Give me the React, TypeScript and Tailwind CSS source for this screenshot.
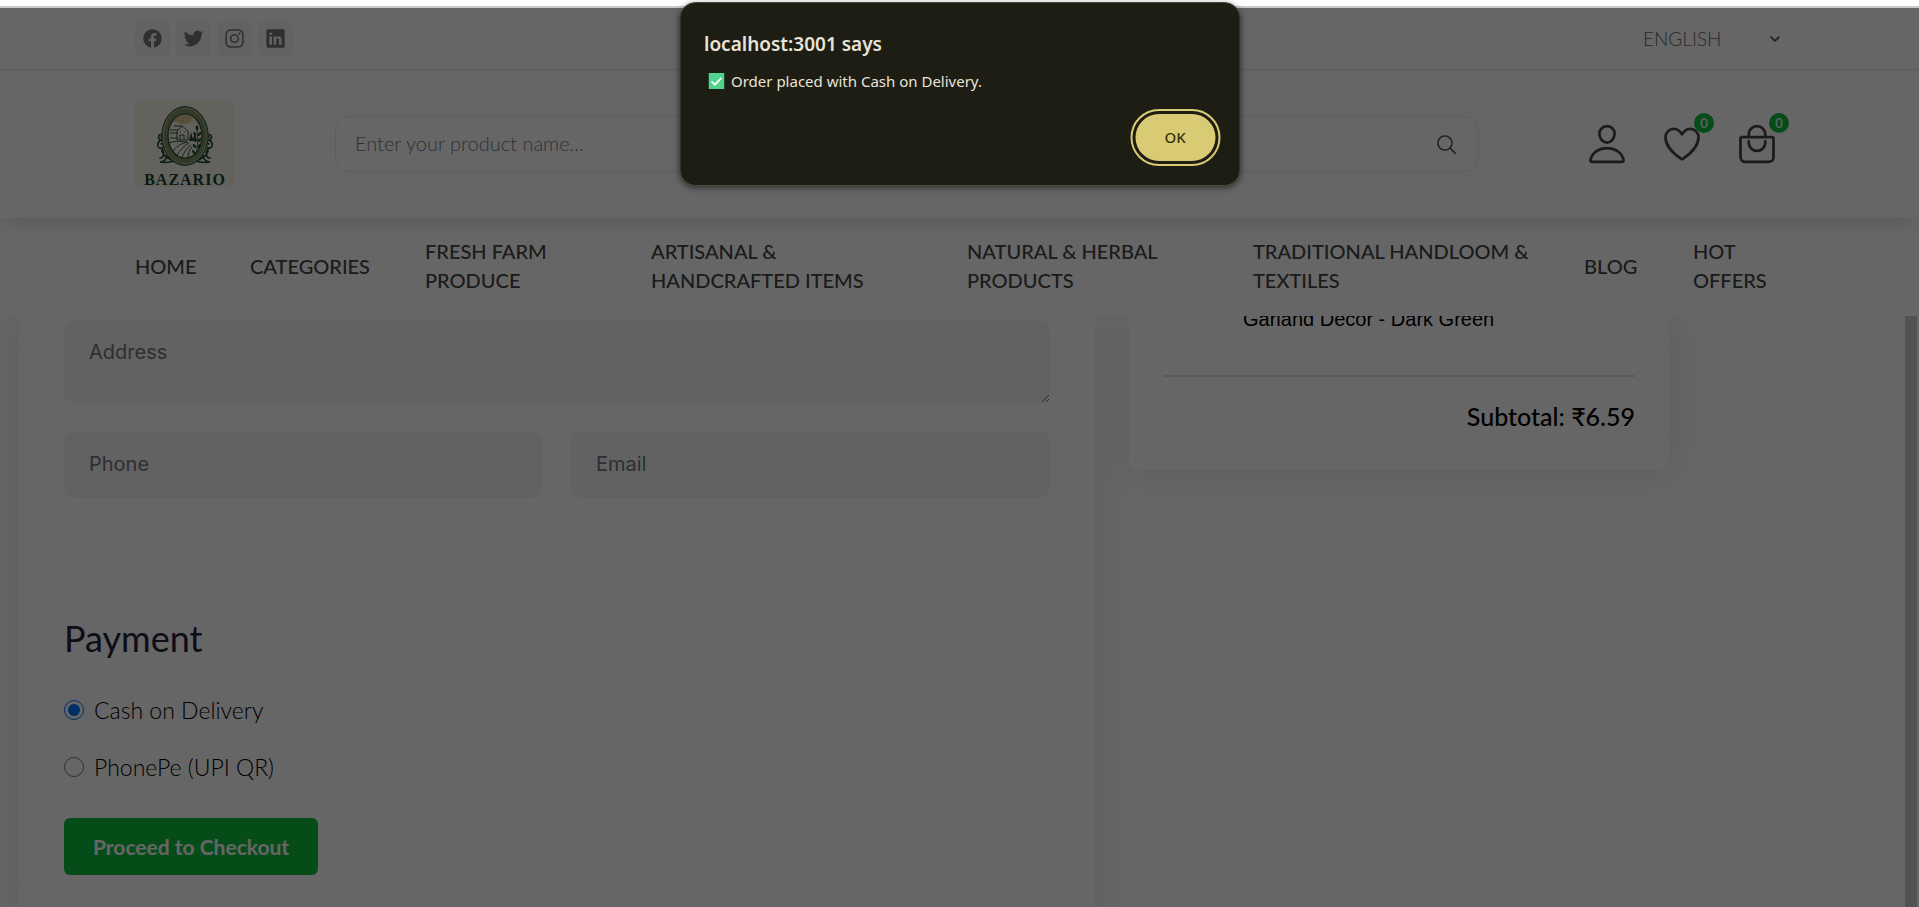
import {
  IoBagHandleOutline,
  IoChevronDown,
  IoHeartOutline,
  IoLogoFacebook,
  IoLogoInstagram,
  IoLogoLinkedin,
  IoLogoTwitter,
  IoPersonOutline,
  IoSearchOutline,
} from "react-icons/io5";

const socials = [
  { name: "Facebook", Icon: IoLogoFacebook },
  { name: "Twitter", Icon: IoLogoTwitter },
  { name: "Instagram", Icon: IoLogoInstagram },
  { name: "LinkedIn", Icon: IoLogoLinkedin },
];

const actions = [
  { name: "Account", Icon: IoPersonOutline, count: null },
  { name: "Wishlist", Icon: IoHeartOutline, count: 0 },
  { name: "Cart", Icon: IoBagHandleOutline, count: 0 },
];

const navItems = [
  ["HOME"],
  ["CATEGORIES"],
  ["FRESH FARM", "PRODUCE"],
  ["ARTISANAL &", "HANDCRAFTED ITEMS"],
  ["NATURAL & HERBAL", "PRODUCTS"],
  ["TRADITIONAL HANDLOOM &", "TEXTILES"],
  ["BLOG"],
  ["HOT", "OFFERS"],
];

const fieldClass =
  "block w-full rounded-[10px] bg-[#f5f5f5] px-[25px] font-['Inter',sans-serif] text-[20px] leading-[30px] placeholder:text-[#74747f] outline-none";

function Logo() {
  return (
    <a href="#" aria-label="Bazario" className="flex h-[86px] w-[100px] flex-col items-center bg-[#f8f4e8] pt-1">
      <svg viewBox="0 0 60 62" className="h-[62px] w-[60px] shrink-0" fill="none">
        <g stroke="#1d4a37" strokeWidth="1.6" strokeLinecap="round">
          <path d="M8 30c-5-2-6 4-2 5c3 0 3-4 0-3M6 35c-5 3-4 9 1 8c4-1 2-6-1-4M7 43c-1 7 7 12 15 13M8 45c2 5 0 8-3 8M12 50c0 4-3 7-7 7c5 1 11 0 15-1M9 32c-1 5 1 10 5 15" />
          <path d="M52 30c5-2 6 4 2 5c-3 0-3-4 0-3M54 35c5 3 4 9-1 8c-4-1-2-6 1-4M53 43c1 7-7 12-15 13M52 45c-2 5 0 8 3 8M48 50c0 4 3 7 7 7c-5 1-11 0-15-1M51 32c1 5-1 10-5 15" />
        </g>
        <ellipse cx="30" cy="31" rx="23.2" ry="29.4" fill="#7f8f60" stroke="#1d4a37" strokeWidth="1" />
        <ellipse cx="30" cy="31" rx="21.8" ry="28" stroke="#cfd0b4" strokeWidth="0.6" />
        <ellipse cx="30" cy="31" rx="17" ry="22" fill="#f6f1e4" stroke="#1d4a37" strokeWidth="1.2" />
        <path d="M20 14c6-5 14-5 19-1l-4 2h4l-5 2h3l-7 2h-7l2-2h-6z" fill="#dcc48c" />
        <g stroke="#1d4a37" strokeWidth="0.9">
          <path d="M15 25h8M15 28h8M15 33h8M22 35v-9l5-5l6 5v9zM19 21h8M25 35v-5h4v5M25 27h1M29 27h1" />
          <path d="M14 38c7-3 13-1 18-1M18 46c4-5 9-8 15-9M22 50c3-5 7-9 12-12M27 52c2-5 5-9 9-12M33 52c0-4 2-8 4-10" />
        </g>
        <path d="M34 36l2-9l2 7l2-6l2 8z" fill="#1d4a37" />
        <path d="M41 50c2-9 2-18 1-26" stroke="#1d4a37" strokeWidth="0.9" />
        <g fill="#1d4a37">
          <ellipse cx="42" cy="23" rx="1.4" ry="2.4" />
          <ellipse cx="39.8" cy="29" rx="1.2" ry="2.3" transform="rotate(-35 39.8 29)" />
          <ellipse cx="44.6" cy="29" rx="1.2" ry="2.3" transform="rotate(35 44.6 29)" />
          <ellipse cx="39.8" cy="35" rx="1.2" ry="2.3" transform="rotate(-35 39.8 35)" />
          <ellipse cx="44.6" cy="35" rx="1.2" ry="2.3" transform="rotate(35 44.6 35)" />
          <ellipse cx="39.4" cy="41" rx="1.2" ry="2.3" transform="rotate(-35 39.4 41)" />
          <ellipse cx="44.2" cy="41" rx="1.2" ry="2.3" transform="rotate(35 44.2 41)" />
          <ellipse cx="38.6" cy="47" rx="1.2" ry="2.3" transform="rotate(-35 38.6 47)" />
        </g>
      </svg>
      <span className="pt-[2px] font-['Liberation_Serif',serif] text-[16px] font-bold leading-[22px] tracking-[1px] text-[#17452f]">
        BAZARIO
      </span>
    </a>
  );
}

function Header() {
  return (
    <header className="relative shrink-0 bg-white">
      <div className="border-b border-[#e9e9e9] px-[135px] py-[13px]">
        <div className="flex items-center justify-between">
          <div className="flex gap-[6px]">
            {socials.map(({ name, Icon }) => (
              <a
                key={name}
                href="#"
                aria-label={name}
                className="flex size-[35px] items-center justify-center rounded-[6px] bg-[#f5f5f5] text-[#757575]"
              >
                <Icon className="size-[21px]" />
              </a>
            ))}
          </div>
          <div className="relative flex items-center">
            <select
              aria-label="Language"
              className="w-[141px] appearance-none bg-transparent text-[19px] font-light leading-[26px] text-[#666] outline-none"
            >
              <option>ENGLISH</option>
            </select>
            <IoChevronDown className="pointer-events-none absolute right-[2px] size-[14px] text-[#555] [&_path]:[stroke-width:64px]" />
          </div>
        </div>
      </div>

      <div className="flex items-center px-[135px] py-[31px] shadow-[0_10px_16px_-5px_rgba(0,0,0,0.12)]">
        <div className="flex w-[200px] shrink-0">
          <Logo />
        </div>
        <form className="flex h-[56px] min-w-0 flex-1 items-center rounded-[14px] border border-[#ececec] pl-[19px] pr-[20px]">
          <input
            type="search"
            aria-label="Search products"
            placeholder="Enter your product name..."
            className="min-w-0 flex-1 bg-transparent pb-[2px] text-[20px] font-light leading-[28px] outline-none placeholder:text-[#757b85]"
          />
          <button type="button" aria-label="Search" className="text-[#444]">
            <IoSearchOutline className="size-[23px]" />
          </button>
        </form>
        <div className="flex gap-[21px] pl-[101px]">
          {actions.map(({ name, Icon, count }) => (
            <button key={name} type="button" aria-label={name} className="relative px-[5px] py-[21px] text-[#444]">
              <Icon className="size-[44px]" />
              {count !== null && (
                <span className="absolute -right-[5px] top-[12px] flex size-[20px] items-center justify-center rounded-full bg-[#0fbf3f] text-[13px] font-medium leading-none text-white">
                  {count}
                </span>
              )}
            </button>
          ))}
        </div>
      </div>

      <nav className="px-[135px] pb-[21px] pt-[19px]">
        <ul className="grid grid-cols-[115fr_175fr_226fr_316fr_286fr_331fr_109fr_91fr] items-center">
          {navItems.map((lines) => (
            <li key={lines[0]}>
              <a href="#" className="block text-[20px] font-medium leading-[29px] text-[#444]">
                {lines.map((line) => (
                  <span key={line} className="block whitespace-nowrap">
                    {line}
                  </span>
                ))}
              </a>
            </li>
          ))}
        </ul>
      </nav>
    </header>
  );
}

function CheckoutForm() {
  return (
    <form className="w-[1076px] bg-white px-[45px] pb-[45px] pt-[4px] shadow-[0_0_40px_rgba(0,0,0,0.1)]">
      <textarea aria-label="Address" placeholder="Address" className={`${fieldClass} h-[83px] resize py-[17px]`} />
      <div className="mt-[28px] grid grid-cols-2 gap-[28px]">
        <input type="tel" aria-label="Phone" placeholder="Phone" className={`${fieldClass} h-[67px] pb-[2px]`} />
        <input type="email" aria-label="Email" placeholder="Email" className={`${fieldClass} h-[67px] pb-[2px]`} />
      </div>
      <h2 className="mt-[116px] text-[36px] leading-[48px] text-[#27213c]">Payment</h2>
      <div className="mt-[30px] flex flex-col gap-[21px] text-[23px] font-light leading-[36px] text-black">
        <label className="flex items-center gap-[10px]">
          <input type="radio" name="payment" defaultChecked className="size-[20px] accent-[#0075ff]" />
          Cash on Delivery
        </label>
        <label className="flex items-center gap-[10px]">
          <input type="radio" name="payment" className="size-[20px]" />
          PhonePe (UPI QR)
        </label>
      </div>
      <button
        type="button"
        className="mt-[33px] h-[57px] rounded-[6px] bg-[#0fbf3f] px-[29px] text-[21px] font-bold text-white"
      >
        Proceed to Checkout
      </button>
    </form>
  );
}

function OrderSummary() {
  return (
    <aside className="w-[540px] rounded-b-[7px] bg-white px-[34px] pb-[34px] text-black shadow-[0_0_40px_rgba(0,0,0,0.1)]">
      <p className="-mt-[12px] border-b-2 border-[#e2e2e2] pb-[41px] pl-[80px] font-['Liberation_Sans',sans-serif] text-[20px] leading-[30px]">
        Garland Decor - Dark Green
      </p>
      <p className="pt-[20px] text-right text-[25px] font-medium leading-[39px]">Subtotal: ₹6.59</p>
    </aside>
  );
}

function AlertDialog() {
  return (
    <div
      role="alertdialog"
      aria-labelledby="alert-title"
      aria-describedby="alert-message"
      className="absolute left-1/2 top-[2px] flex w-[561px] -translate-x-1/2 flex-col rounded-[16px] border border-[#4a493f] bg-[#1d1d14] px-[24px] pb-[24px] pt-[25px] font-['Noto_Sans',sans-serif] text-[#e8e4d8] shadow-[0_2px_6px_rgba(0,0,0,0.5)]"
    >
      <h1 id="alert-title" className="text-[19px] font-semibold leading-[32px]">
        localhost:3001 says
      </h1>
      <p id="alert-message" className="flex items-center gap-[7px] pl-[4px] pt-[9px] text-[15px] leading-[24px]">
        <svg viewBox="0 0 16 16" className="size-[16px]" aria-label="Done">
          <rect width="16" height="16" fill="#4fd48d" />
          <path d="M3 8.4l3.4 3.3L13 4.8" fill="none" stroke="#fff" strokeWidth="1.8" />
        </svg>
        Order placed with Cash on Delivery.
      </p>
      <button
        type="button"
        className="mt-[21px] h-[47px] w-[80px] self-end rounded-[24px] bg-[#d8cb74] text-[15px] font-medium text-[#3a3408] outline-2 outline-offset-[3px] outline-[#d8cb74]"
      >
        OK
      </button>
    </div>
  );
}

export default function App() {
  return (
    <div className="relative flex h-screen flex-col overflow-hidden bg-white font-['Lato','Liberation_Sans',sans-serif]">
      <div className="h-[8px] shrink-0 border-b-2 border-[#c9c9c9] bg-white" />
      <Header />
      <div className="flex min-h-0 flex-1">
        <main className="flex min-w-0 flex-1 items-start gap-[34px] overflow-hidden pl-[19px]">
          <CheckoutForm />
          <OrderSummary />
        </main>
        <div className="mr-[2px] w-[12px] shrink-0 bg-[#cdcdcd]" />
      </div>
      <div className="absolute inset-x-0 bottom-0 top-[8px] bg-black/60" />
      <AlertDialog />
    </div>
  );
}
